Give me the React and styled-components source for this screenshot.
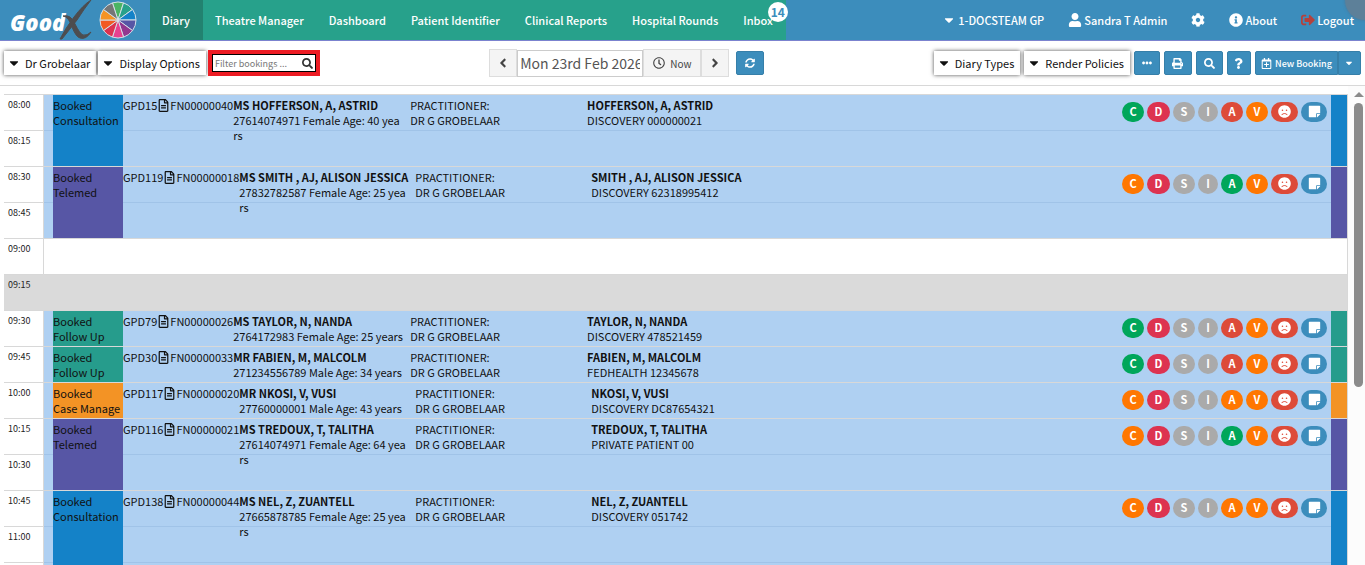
import React, { useState } from 'react';
import styled, { createGlobalStyle } from 'styled-components';
import {
  FaAngleLeft,
  FaAngleRight,
  FaCaretDown,
  FaCog,
  FaEllipsisH,
  FaFrown,
  FaInfoCircle,
  FaPrint,
  FaQuestion,
  FaRegCalendarPlus,
  FaRegClock,
  FaRegFileAlt,
  FaSearch,
  FaSignOutAlt,
  FaStickyNote,
  FaSyncAlt,
  FaUser,
} from 'react-icons/fa';

const GlobalStyle = createGlobalStyle`
  * {
    box-sizing: border-box;
  }
  body {
    margin: 0;
    background: #fff;
    color: #111;
    font-family: 'Noto Sans CJK SC', 'Open Sans', sans-serif;
    font-size: 11px;
    line-height: 15px;
  }
  button, input {
    font-family: inherit;
  }
`;

const StyledPage = styled.div`
  display: flex;
  flex-direction: column;
  height: 100vh;
  overflow: hidden;
`;

const StyledHeader = styled.header`
  position: relative;
  display: flex;
  flex: none;
  height: 41px;
  overflow: hidden;
  background: #3c8dbc;
  border-bottom: 1px solid #7b83cf;
  color: #fff;
  line-height: 20px;

  &::after {
    content: '';
    position: absolute;
    top: -20px;
    right: -20px;
    width: 40px;
    height: 40px;
    border-radius: 50%;
    background: rgba(115, 120, 130, 0.6);
    box-shadow: 0 0 3px rgba(90, 100, 120, 0.6);
    pointer-events: none;
  }
`;

const StyledBrand = styled.a`
  display: flex;
  align-items: center;
  width: 150px;
  padding-left: 8px;
`;

const StyledNav = styled.nav`
  display: flex;
  background: #27a18b;
`;

const StyledNavLink = styled.a`
  position: relative;
  display: flex;
  align-items: center;
  padding: 0 13px 0 12px;
  color: #fff;
  font-weight: 500;
  text-decoration: none;
  white-space: nowrap;
  background: ${(props) => (props.$active ? '#228270' : 'transparent')};
`;

const StyledCount = styled.span`
  position: absolute;
  top: 2px;
  right: -2px;
  width: 20px;
  height: 20px;
  border-radius: 50%;
  background: #fff;
  color: #3c8dbc;
  font-size: 12px;
  font-weight: 700;
  text-align: center;
`;

const StyledUserMenu = styled.div`
  display: flex;
  align-items: center;
  gap: 24px;
  margin-left: auto;
  padding-right: 11px;
`;

const StyledUserLink = styled.a`
  display: flex;
  align-items: center;
  gap: 2px;
  color: #fff;
  font-weight: 500;
  text-decoration: none;
  white-space: nowrap;
`;

const StyledToolbar = styled.div`
  display: flex;
  flex: none;
  align-items: center;
  justify-content: space-between;
  height: 45px;
  padding: 0 4px;
  border-bottom: 1px solid #d8d8d8;
`;

const StyledGroup = styled.div`
  display: flex;
  align-items: center;
  gap: ${(props) => props.$gap || 0}px;
`;

const StyledDropButton = styled.button`
  display: flex;
  align-items: center;
  gap: 4px;
  height: 24px;
  padding: 0 6px 0 3px;
  border: none;
  background: #fff;
  color: #111;
  font-size: 11px;
  white-space: nowrap;
  box-shadow: 0 0 4px rgba(0, 0, 0, 0.7);
`;

const StyledFilter = styled.label`
  display: flex;
  padding: 4px;
  background: #ed1c24;
`;

const StyledFilterBox = styled.span`
  display: flex;
  align-items: center;
  width: 104px;
  height: 18px;
  padding: 0 2px;
  border: 1px solid #000;
  background: #fff;
  color: #333;
`;

const StyledFilterInput = styled.input`
  flex: 1;
  min-width: 0;
  padding: 0;
  border: none;
  outline: none;
  font-size: 9px;

  &::placeholder {
    color: #777;
  }
`;

const StyledDateButton = styled.button`
  display: flex;
  align-items: center;
  justify-content: center;
  gap: 5px;
  min-width: 28px;
  height: 28px;
  padding: 0 6px;
  border: 1px solid #ddd;
  background: #f4f4f4;
  color: #444;
  font-size: 10px;
`;

const StyledNowButton = styled(StyledDateButton)`
  padding: 0 9px;
`;

const StyledDateInput = styled.input`
  width: 126px;
  height: 27px;
  padding: 0 2px;
  border: 1px solid #ccc;
  color: #555;
  font-size: 14px;
  text-align: center;
`;

const StyledBlueButton = styled.button`
  display: flex;
  align-items: center;
  justify-content: center;
  gap: 3px;
  width: ${(props) => props.$width}px;
  height: 24px;
  padding: 0;
  border: 1px solid #367fa9;
  border-radius: ${(props) => props.$radius || '2px'};
  background: #3c8dbc;
  color: #fff;
  font-size: 9px;
  font-weight: 500;
  white-space: nowrap;
`;

const StyledMain = styled.main`
  display: flex;
  flex: 1;
  min-height: 0;
  padding-left: 4px;
`;

const StyledDiary = styled.div`
  flex: 1;
  padding-top: 8px;
`;

const StyledSlotGroup = styled.section`
  display: flex;
  background: ${(props) => (props.$blocked ? '#dadada' : '#fff')};
`;

const StyledTimes = styled.div`
  flex: none;
  width: 40px;
  border-right: 1px solid ${(props) => (props.$blocked ? '#dadada' : '#d8d8d8')};
`;

const StyledTime = styled.div`
  height: 36px;
  padding: 2px 4px;
  border-top: 1px solid #d8d8d8;
  color: #222;
  font-size: 9px;
`;

const StyledFree = styled.div`
  flex: 1;
  border-top: 1px solid #d8d8d8;
  border-right: 1px solid #d8d8d8;
`;

const StyledBooking = styled.article`
  display: flex;
  flex: 1;
  height: ${(props) => props.$slots * 36}px;
  padding-left: 9px;
  border-top: 1px solid #d8d8d8;
  border-right: 1px solid #d8d8d8;
  overflow: hidden;
  background: repeating-linear-gradient(#afd0f2 0 35px, #a0c3e8 35px 36px);
`;

const StyledStatus = styled.div`
  flex: none;
  width: 70px;
  padding-top: 3px;
  overflow: hidden;
  white-space: nowrap;
  background: ${(props) => props.$color};
`;

const StyledFile = styled.div`
  display: flex;
  flex: none;
  align-items: center;
  height: 21px;
  padding: 3px 0;
`;

const StyledColumn = styled.div`
  flex: ${(props) => props.$grow} 0 0;
  min-width: 0;
  padding-top: 3px;
  white-space: pre;
`;

const StyledName = styled.div`
  font-weight: 700;
  white-space: nowrap;
`;

const StyledPolicy = styled.div`
  display: flex;
  flex: 46 0 0;
  justify-content: space-between;
  padding: 3px 4px 0 0;
`;

const StyledBadges = styled.div`
  display: flex;
  gap: 3px;
  padding-top: 4px;
`;

const StyledBadge = styled.button`
  display: flex;
  align-items: center;
  justify-content: center;
  width: ${(props) => props.$width}px;
  height: 20px;
  padding: 0 0 2px;
  border: none;
  border-radius: 10px;
  background: ${(props) => props.$color};
  color: #fff;
  font-size: 11px;
  font-weight: 700;
`;

const StyledStrip = styled.div`
  flex: none;
  width: 16px;
  background: ${(props) => props.$color};
`;

const StyledScrollbar = styled.div`
  display: flex;
  flex: none;
  flex-direction: column;
  align-items: center;
  gap: 6px;
  width: 17px;
  padding: 6px 0 0 4px;
  background: #fcfcfc;
`;

const StyledThumb = styled.div`
  width: 9px;
  height: 60%;
  border-radius: 5px;
  background: #8b8b8b;
`;

const WHEEL = ['#4bb563', '#27a18b', '#1482c8', '#5756a5', '#93378f', '#e8418f', '#dd3350', '#f15a24', '#f59324', '#767676'];

const STATUS = {
  consultation: '#1482c8',
  telemed: '#5756a5',
  followUp: '#269c8c',
  caseManage: '#f39325',
};

const GREEN = '#00a65a';
const RED = '#dd4b39';
const ORANGE = '#ff7701';
const GREY = '#aaa';
const CRIMSON = '#dd3350';

const GROUPS = [
  {
    times: ['08:00', '08:15'],
    booking: {
      type: 'Consultation', color: STATUS.consultation, debtor: 'GPD15', file: 'FN00000040',
      name: 'MS HOFFERSON, A, ASTRID', details: '27614074971 Female Age: 40 yea\nrs',
      member: 'HOFFERSON, A, ASTRID', scheme: 'DISCOVERY 000000021', c: GREEN, a: RED,
    },
  },
  {
    times: ['08:30', '08:45'],
    booking: {
      type: 'Telemed', color: STATUS.telemed, debtor: 'GPD119', file: 'FN00000018',
      name: 'MS SMITH , AJ, ALISON JESSICA', details: '27832782587 Female Age: 25 yea\nrs',
      member: 'SMITH , AJ, ALISON JESSICA', scheme: 'DISCOVERY 62318995412', c: ORANGE, a: GREEN,
    },
  },
  { times: ['09:00'] },
  { times: ['09:15'], blocked: true },
  {
    times: ['09:30'],
    booking: {
      type: 'Follow Up', color: STATUS.followUp, debtor: 'GPD79', file: 'FN00000026',
      name: 'MS TAYLOR, N, NANDA', details: '2764172983 Female Age: 25 years',
      member: 'TAYLOR, N, NANDA', scheme: 'DISCOVERY 478521459', c: GREEN, a: RED,
    },
  },
  {
    times: ['09:45'],
    booking: {
      type: 'Follow Up', color: STATUS.followUp, debtor: 'GPD30', file: 'FN00000033',
      name: 'MR FABIEN, M, MALCOLM', details: '271234556789 Male Age: 34 years',
      member: 'FABIEN, M, MALCOLM', scheme: 'FEDHEALTH 12345678', c: GREEN, a: RED,
    },
  },
  {
    times: ['10:00'],
    booking: {
      type: 'Case Manage', color: STATUS.caseManage, debtor: 'GPD117', file: 'FN00000020',
      name: 'MR NKOSI, V, VUSI', details: '27760000001 Male Age: 43 years',
      member: 'NKOSI, V, VUSI', scheme: 'DISCOVERY DC87654321', c: ORANGE, a: ORANGE,
    },
  },
  {
    times: ['10:15', '10:30'],
    booking: {
      type: 'Telemed', color: STATUS.telemed, debtor: 'GPD116', file: 'FN00000021',
      name: 'MS TREDOUX, T, TALITHA', details: '27614074971 Female Age: 64 yea\nrs',
      member: 'TREDOUX, T, TALITHA', scheme: 'PRIVATE PATIENT 00', c: ORANGE, a: GREEN,
    },
  },
  {
    times: ['10:45', '11:00', ''],
    booking: {
      type: 'Consultation', color: STATUS.consultation, debtor: 'GPD138', file: 'FN00000044',
      name: 'MS NEL, Z, ZUANTELL', details: '27665878785 Female Age: 25 yea\nrs',
      member: 'NEL, Z, ZUANTELL', scheme: 'DISCOVERY 051742', c: ORANGE, a: ORANGE,
    },
  },
];

const NAV = ['Diary', 'Theatre Manager', 'Dashboard', 'Patient Identifier', 'Clinical Reports', 'Hospital Rounds', 'Inbox'];

const wheelPoint = (step) => {
  const angle = ((step - 0.5) * Math.PI) / 5 - Math.PI / 2;
  return `${19 + 18 * Math.cos(angle)} ${19 + 18 * Math.sin(angle)}`;
};

const Logo = () => (
  <svg width="130" height="40" viewBox="0 0 130 40" role="img" aria-label="GoodX">
    <text x="2" y="31" fill="#fff" fontFamily="Open Sans" fontSize="22" fontStyle="italic" fontWeight="800">Good</text>
    <g fill="#4d4d4f" stroke="#4d4d4f">
      <path d="M55 16q8-2 12 8q5 10 8 11q4 1 8-3q-5 8-11 6q-4-1-8-11q-3-10-9-11z" />
      <path d="M83 0q-8 5-17 17q-9 12-14 22h2q8-10 15-19q7-11 14-20z" />
    </g>
    <g transform="translate(91 1)">
      {WHEEL.map((color, i) => (
        <path
          key={color}
          d={`M19 19L${wheelPoint(i)}A18 18 0 0 1 ${wheelPoint(i + 1)}Z`}
          fill={color}
          stroke="#d5e0e8"
        />
      ))}
    </g>
  </svg>
);

const Booking = ({ booking, slots }) => (
  <StyledBooking $slots={slots}>
    <StyledStatus $color={booking.color}>
      Booked
      <br />
      {booking.type}
    </StyledStatus>
    <StyledFile>
      {booking.debtor}
      <FaRegFileAlt size={13} />
      {booking.file}
    </StyledFile>
    <StyledColumn $grow={11}>
      <StyledName>{booking.name}</StyledName>
      {booking.details}
    </StyledColumn>
    <StyledColumn $grow={11}>
      PRACTITIONER:
      <br />
      DR G GROBELAAR
    </StyledColumn>
    <StyledPolicy>
      <div>
        <StyledName>{booking.member}</StyledName>
        {booking.scheme}
      </div>
      <StyledBadges>
        <StyledBadge $width={22} $color={booking.c}>C</StyledBadge>
        <StyledBadge $width={23} $color={CRIMSON}>D</StyledBadge>
        <StyledBadge $width={22} $color={GREY}>S</StyledBadge>
        <StyledBadge $width={20} $color={GREY}>I</StyledBadge>
        <StyledBadge $width={22} $color={booking.a}>A</StyledBadge>
        <StyledBadge $width={22} $color={ORANGE}>V</StyledBadge>
        <StyledBadge $width={27} $color={RED} aria-label="Mood"><FaFrown size={13} /></StyledBadge>
        <StyledBadge $width={26} $color="#3c8dbc" aria-label="Note"><FaStickyNote size={13} /></StyledBadge>
      </StyledBadges>
    </StyledPolicy>
    <StyledStrip $color={booking.color} />
  </StyledBooking>
);

const App = () => {
  const [filter, setFilter] = useState('');
  const [date, setDate] = useState('Mon 23rd Feb 2026');

  return (
    <StyledPage>
      <GlobalStyle />
      <StyledHeader>
        <StyledBrand href="#"><Logo /></StyledBrand>
        <StyledNav>
          {NAV.map((item) => (
            <StyledNavLink key={item} href="#" $active={item === 'Diary'}>
              {item}
              {item === 'Inbox' && <StyledCount>14</StyledCount>}
            </StyledNavLink>
          ))}
        </StyledNav>
        <StyledUserMenu>
          <StyledUserLink href="#"><FaCaretDown size={14} />1-DOCSTEAM GP</StyledUserLink>
          <StyledUserLink href="#"><FaUser size={14} />Sandra T Admin</StyledUserLink>
          <StyledUserLink href="#" aria-label="Settings"><FaCog size={14} /></StyledUserLink>
          <StyledUserLink href="#"><FaInfoCircle size={14} />About</StyledUserLink>
          <StyledUserLink href="#"><FaSignOutAlt size={14} color="#b5413c" />Logout</StyledUserLink>
        </StyledUserMenu>
      </StyledHeader>

      <StyledToolbar>
        <StyledGroup $gap={2}>
          <StyledDropButton><FaCaretDown size={14} />Dr Grobelaar</StyledDropButton>
          <StyledDropButton><FaCaretDown size={14} />Display Options</StyledDropButton>
          <StyledFilter>
            <StyledFilterBox>
              <StyledFilterInput
                aria-label="Filter bookings"
                placeholder="Filter bookings ..."
                value={filter}
                onChange={(e) => setFilter(e.target.value)}
              />
              <FaSearch size={11} />
            </StyledFilterBox>
          </StyledFilter>
        </StyledGroup>
        <StyledGroup $gap={7}>
          <StyledGroup>
            <StyledDateButton aria-label="Previous day"><FaAngleLeft size={14} /></StyledDateButton>
            <StyledDateInput aria-label="Date" value={date} onChange={(e) => setDate(e.target.value)} />
            <StyledNowButton><FaRegClock size={12} />Now</StyledNowButton>
            <StyledDateButton aria-label="Next day"><FaAngleRight size={14} /></StyledDateButton>
          </StyledGroup>
          <StyledBlueButton $width={28} aria-label="Refresh"><FaSyncAlt size={10} /></StyledBlueButton>
        </StyledGroup>
        <StyledGroup $gap={4}>
          <StyledDropButton><FaCaretDown size={14} />Diary Types</StyledDropButton>
          <StyledDropButton><FaCaretDown size={14} />Render Policies</StyledDropButton>
          <StyledBlueButton $width={26} aria-label="More"><FaEllipsisH size={10} /></StyledBlueButton>
          <StyledBlueButton $width={28} aria-label="Print"><FaPrint size={11} /></StyledBlueButton>
          <StyledBlueButton $width={27} aria-label="Search"><FaSearch size={11} /></StyledBlueButton>
          <StyledBlueButton $width={24} aria-label="Help"><FaQuestion size={11} /></StyledBlueButton>
          <StyledGroup>
            <StyledBlueButton $width={83} $radius="2px 0 0 2px"><FaRegCalendarPlus size={11} />New Booking</StyledBlueButton>
            <StyledBlueButton $width={23} $radius="0 2px 2px 0" aria-label="Booking options"><FaCaretDown size={10} /></StyledBlueButton>
          </StyledGroup>
        </StyledGroup>
      </StyledToolbar>

      <StyledMain>
        <StyledDiary>
          {GROUPS.map((group) => (
            <StyledSlotGroup key={group.times[0]} $blocked={group.blocked}>
              <StyledTimes $blocked={group.blocked}>
                {group.times.map((time) => (
                  <StyledTime key={time}>{time}</StyledTime>
                ))}
              </StyledTimes>
              {group.booking ? <Booking booking={group.booking} slots={group.times.length} /> : <StyledFree />}
            </StyledSlotGroup>
          ))}
        </StyledDiary>
        <StyledScrollbar>
          <svg width="10" height="5"><path d="M0 5L5 0L10 5z" fill="#8b8b8b" /></svg>
          <StyledThumb />
        </StyledScrollbar>
      </StyledMain>
    </StyledPage>
  );
};

export default App;
